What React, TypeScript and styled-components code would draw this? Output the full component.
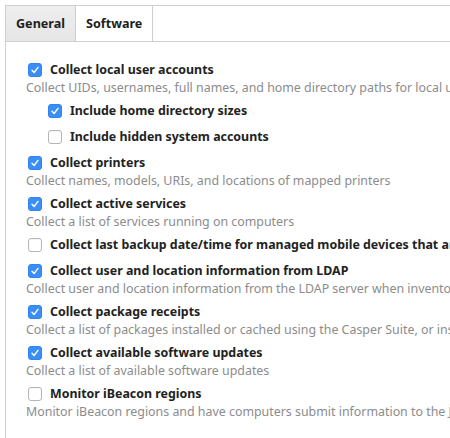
import React from "react";
import styled, { createGlobalStyle } from "styled-components";

const GlobalStyle = createGlobalStyle`
  html, body { margin: 0; padding: 0; background: #ffffff; }
  body { font-family: "Noto Sans", "Open Sans", sans-serif; font-size: 12.4px; color: #222; }
`;

const Panel = styled.div`
  margin: 5px 0 0 5px;
  height: 433px;
  border-left: 1px solid #cfcfcf;
  border-top: 1px solid #cfcfcf;
  box-sizing: border-box;
  overflow: hidden;
`;

const TabBar = styled.div`
  display: flex;
  height: 36px;
  border-bottom: 1px solid #cfcfcf;
  box-sizing: border-box;
`;

const Tab = styled.div<{ $active?: boolean }>`
  display: flex;
  align-items: center;
  padding: 0 10px 1px 10px;
  border-right: 1px solid #cfcfcf;
  background: ${(p) => (p.$active ? "linear-gradient(#eeeeee, #e6e6e6)" : "#ffffff")};
  font-weight: 700;
  font-size: 12.6px;
  color: #1e1e1e;
`;

const Content = styled.div`
  padding: 17px 0 0 20px;
  display: flex;
  flex-direction: column;
  gap: 5px;
`;

const Item = styled.div<{ $nested?: boolean }>`
  display: flex;
  flex-direction: column;
  padding-left: ${(p) => (p.$nested ? "20px" : "0")};
  white-space: nowrap;
`;

const LabelRow = styled.label`
  display: flex;
  align-items: center;
  height: 21px;
  gap: 8px;
  padding-left: 2px;
  font-weight: 700;
  color: #222;
`;

const Box = styled.span<{ $checked?: boolean }>`
  width: 14px;
  height: 14px;
  box-sizing: border-box;
  border-radius: 3px;
  flex: none;
  display: flex;
  align-items: center;
  justify-content: center;
  background: ${(p) => (p.$checked ? "#3a8ef6" : "#ffffff")};
  border: 1px solid ${(p) => (p.$checked ? "#2f84ee" : "#b5b5b5")};
  box-shadow: ${(p) => (p.$checked ? "none" : "inset 0 1px 1px rgba(0,0,0,0.04)")};
`;

const Desc = styled.div`
  height: 15px;
  line-height: 15px;
  color: #8c8c8c;
`;

const Nested = styled.div`
  display: flex;
  flex-direction: column;
  gap: 5px;
  margin-top: 5px;
`;

const Check = () => (
  <svg width="10" height="10" viewBox="0 0 10 10">
    <path d="M2 5.3 L4.1 7.5 L8 2.4" fill="none" stroke="#fff" strokeWidth="1.4" strokeLinecap="round" strokeLinejoin="round" />
  </svg>
);

type Opt = { label: string; desc?: string; checked: boolean; nested?: boolean };

const CheckItem = ({ label, desc, checked, nested, children }: Opt & { children?: React.ReactNode }) => (
  <Item $nested={nested}>
    <LabelRow>
      <Box $checked={checked}>{checked && <Check />}</Box>
      {label}
    </LabelRow>
    {desc && <Desc>{desc}</Desc>}
    {children}
  </Item>
);

const items: Opt[] = [
  { label: "Collect printers", desc: "Collect names, models, URIs, and locations of mapped printers", checked: true },
  { label: "Collect active services", desc: "Collect a list of services running on computers", checked: true },
  { label: "Collect last backup date/time for managed mobile devices that are synced to computers", checked: false },
  { label: "Collect user and location information from LDAP", desc: "Collect user and location information from the LDAP server when inventory is collected", checked: true },
  { label: "Collect package receipts", desc: "Collect a list of packages installed or cached using the Casper Suite, or installed by Installer.app or Software Update", checked: true },
  { label: "Collect available software updates", desc: "Collect a list of available software updates", checked: true },
  { label: "Monitor iBeacon regions", desc: "Monitor iBeacon regions and have computers submit information to the JSS", checked: false },
];

export default function App() {
  return (
    <>
      <GlobalStyle />
      <Panel>
        <TabBar>
          <Tab $active>General</Tab>
          <Tab>Software</Tab>
        </TabBar>
        <Content>
          <CheckItem
            label="Collect local user accounts"
            desc="Collect UIDs, usernames, full names, and home directory paths for local user accounts"
            checked
          >
            <Nested>
              <CheckItem label="Include home directory sizes" checked nested />
              <CheckItem label="Include hidden system accounts" checked={false} nested />
            </Nested>
          </CheckItem>
          {items.map((it) => (
            <CheckItem key={it.label} {...it} />
          ))}
        </Content>
      </Panel>
    </>
  );
}
